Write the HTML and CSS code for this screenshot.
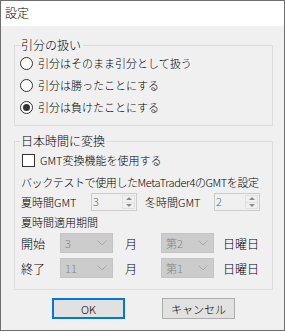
FILE: index.html
```html
<!DOCTYPE html>
<html lang="ja">
<head>
<meta charset="utf-8">
<title>設定</title>
<link rel="stylesheet" href="styles.css">
</head>
<body>
<div class="window">
  <div class="titlebar">設定</div>
  <div class="content">
    <fieldset class="group g1">
      <legend>引分の扱い</legend>
      <div class="radio-row"><span class="radio"></span><span>引分はそのまま引分として扱う</span></div>
      <div class="radio-row"><span class="radio"></span><span>引分は勝ったことにする</span></div>
      <div class="radio-row"><span class="radio checked"></span><span>引分は負けたことにする</span></div>
    </fieldset>
    <fieldset class="group g2">
      <legend>日本時間に変換</legend>
      <div class="check-row"><span class="checkbox"></span><span>GMT変換機能を使用する</span></div>
      <div class="text-row tight">バックテストで使用したMetaTrader4のGMTを設定</div>
      <div class="gmt-row">
        <span class="lbl-summer">夏時間GMT</span>
        <span class="spinner"><span class="val">3</span><span class="spin"><span class="up"></span><span class="down"></span></span></span>
        <span class="lbl-winter">冬時間GMT</span>
        <span class="spinner"><span class="val">2</span><span class="spin"><span class="up"></span><span class="down"></span></span></span>
      </div>
      <div class="text-row period">夏時間適用期間</div>
      <div class="combo-row">
        <span class="lbl-se">開始</span>
        <span class="combo"><span>3</span><svg width="10" height="6" viewBox="0 0 10 6"><polyline points="0.5,0.5 5,5 9.5,0.5" fill="none" stroke="#a8a8a8" stroke-width="1"/></svg></span>
        <span class="lbl-month">月</span>
        <span class="combo"><span>第2</span><svg width="10" height="6" viewBox="0 0 10 6"><polyline points="0.5,0.5 5,5 9.5,0.5" fill="none" stroke="#a8a8a8" stroke-width="1"/></svg></span>
        <span class="lbl-day">日曜日</span>
      </div>
      <div class="combo-row second">
        <span class="lbl-se">終了</span>
        <span class="combo"><span>11</span><svg width="10" height="6" viewBox="0 0 10 6"><polyline points="0.5,0.5 5,5 9.5,0.5" fill="none" stroke="#a8a8a8" stroke-width="1"/></svg></span>
        <span class="lbl-month">月</span>
        <span class="combo"><span>第1</span><svg width="10" height="6" viewBox="0 0 10 6"><polyline points="0.5,0.5 5,5 9.5,0.5" fill="none" stroke="#a8a8a8" stroke-width="1"/></svg></span>
        <span class="lbl-day">日曜日</span>
      </div>
    </fieldset>
    <div class="buttons">
      <button class="btn default">OK</button>
      <button class="btn">キャンセル</button>
    </div>
  </div>
</div>
</body>
</html>
```

FILE: styles.css
```css
* { box-sizing: border-box; }
html, body { margin: 0; padding: 0; }
body {
  width: 285px;
  height: 331px;
  font-family: "Noto Sans CJK JP", "Noto Sans", sans-serif;
  font-size: 11px;
  font-weight: 300;
  color: #000;
  background: #f0f0f0;
}
.window {
  width: 285px;
  height: 331px;
  border: 1px solid #6e6e6e;
  background: #f0f0f0;
  display: flex;
  flex-direction: column;
}
.titlebar {
  height: 25px;
  background: #fff;
  padding-left: 4px;
  line-height: 24px;
  font-size: 12px;
}
.content {
  padding: 12px 11px 0 13px;
}
.group {
  margin: 0;
  width: 259px;
  border: 1px solid #dcdcdc;
  padding: 0;
  min-width: 0;
}
.group legend {
  margin-left: 5px;
  padding: 0 2px 0 1px;
  line-height: 14px;
  height: 14px;
  font-size: 12px;
}
.g1 { padding-bottom: 7px; }
.radio-row {
  height: 22px;
  display: flex;
  align-items: center;
  padding-left: 5px;
}
.radio {
  width: 13px;
  height: 13px;
  border: 1px solid #333;
  border-radius: 50%;
  background: #fff;
  margin-right: 5px;
  display: flex;
  align-items: center;
  justify-content: center;
  flex: none;
}
.radio.checked::after {
  content: "";
  width: 7px;
  height: 7px;
  border-radius: 50%;
  background: #333;
}
.g2 {
  margin-top: 8px;
  padding-bottom: 10px;
}
.check-row {
  height: 24px;
  display: flex;
  align-items: center;
  padding-left: 7px;
}
.checkbox {
  width: 13px;
  height: 13px;
  border: 1px solid #333;
  background: #fff;
  margin-right: 5px;
  flex: none;
}
.text-row {
  height: 20px;
  line-height: 20px;
  padding-left: 6px;
  white-space: nowrap;
}
.text-row.tight { letter-spacing: -0.4px; }
.gmt-row {
  height: 20px;
  display: flex;
  align-items: center;
  padding-left: 6px;
}
.lbl-summer { width: 70px; }
.lbl-winter { width: 69px; margin-left: 8px; }
.spinner {
  width: 46px;
  height: 18px;
  border: 1px solid #cccccc;
  background: #f0f0f0;
  display: flex;
  color: #6d6d6d;
}
.spinner .val {
  flex: 1;
  padding-left: 1px;
  line-height: 14px;
}
.spin {
  width: 13px;
  display: flex;
  flex-direction: column;
  margin: 1px 1px 1px 0;
  border: 1px solid #e0e0e0;
}
.spin .up, .spin .down {
  flex: 1;
  display: flex;
  align-items: center;
  justify-content: center;
}
.spin .up { border-bottom: 1px solid #e0e0e0; }
.spin .up::after {
  content: "";
  border-left: 3px solid transparent;
  border-right: 3px solid transparent;
  border-bottom: 3px solid #8a8a8a;
}
.spin .down::after {
  content: "";
  border-left: 3px solid transparent;
  border-right: 3px solid transparent;
  border-top: 3px solid #8a8a8a;
}
.period { height: 20px; }
.combo-row {
  height: 22px;
  display: flex;
  align-items: center;
  padding-left: 6px;
}
.combo-row.second { margin-top: 3px; }
.lbl-se { width: 39px; font-size: 12px; }
.lbl-month { width: 36px; padding-left: 12px; box-sizing: content-box; font-size: 12px; }
.lbl-day { padding-left: 9px; font-size: 12px; }
.combo {
  width: 53px;
  height: 20px;
  background: #cccccc;
  border: 1px solid #c4c4c4;
  color: #838383;
  display: flex;
  align-items: center;
  justify-content: space-between;
  padding: 0 5px 0 4px;
  flex: none;
}
.buttons {
  display: flex;
  margin-top: 8px;
  padding-left: 38px;
  gap: 37px;
}
.btn {
  width: 73px;
  height: 21px;
  background: #e1e1e1;
  border: 1px solid #adadad;
  font-family: "Noto Sans CJK JP", "Noto Sans", sans-serif;
  font-size: 11px;
  font-weight: 300;
  padding: 0;
  line-height: 18px;
  color: #000;
}
.btn.default {
  border: 2px solid #0078d7;
}
```
